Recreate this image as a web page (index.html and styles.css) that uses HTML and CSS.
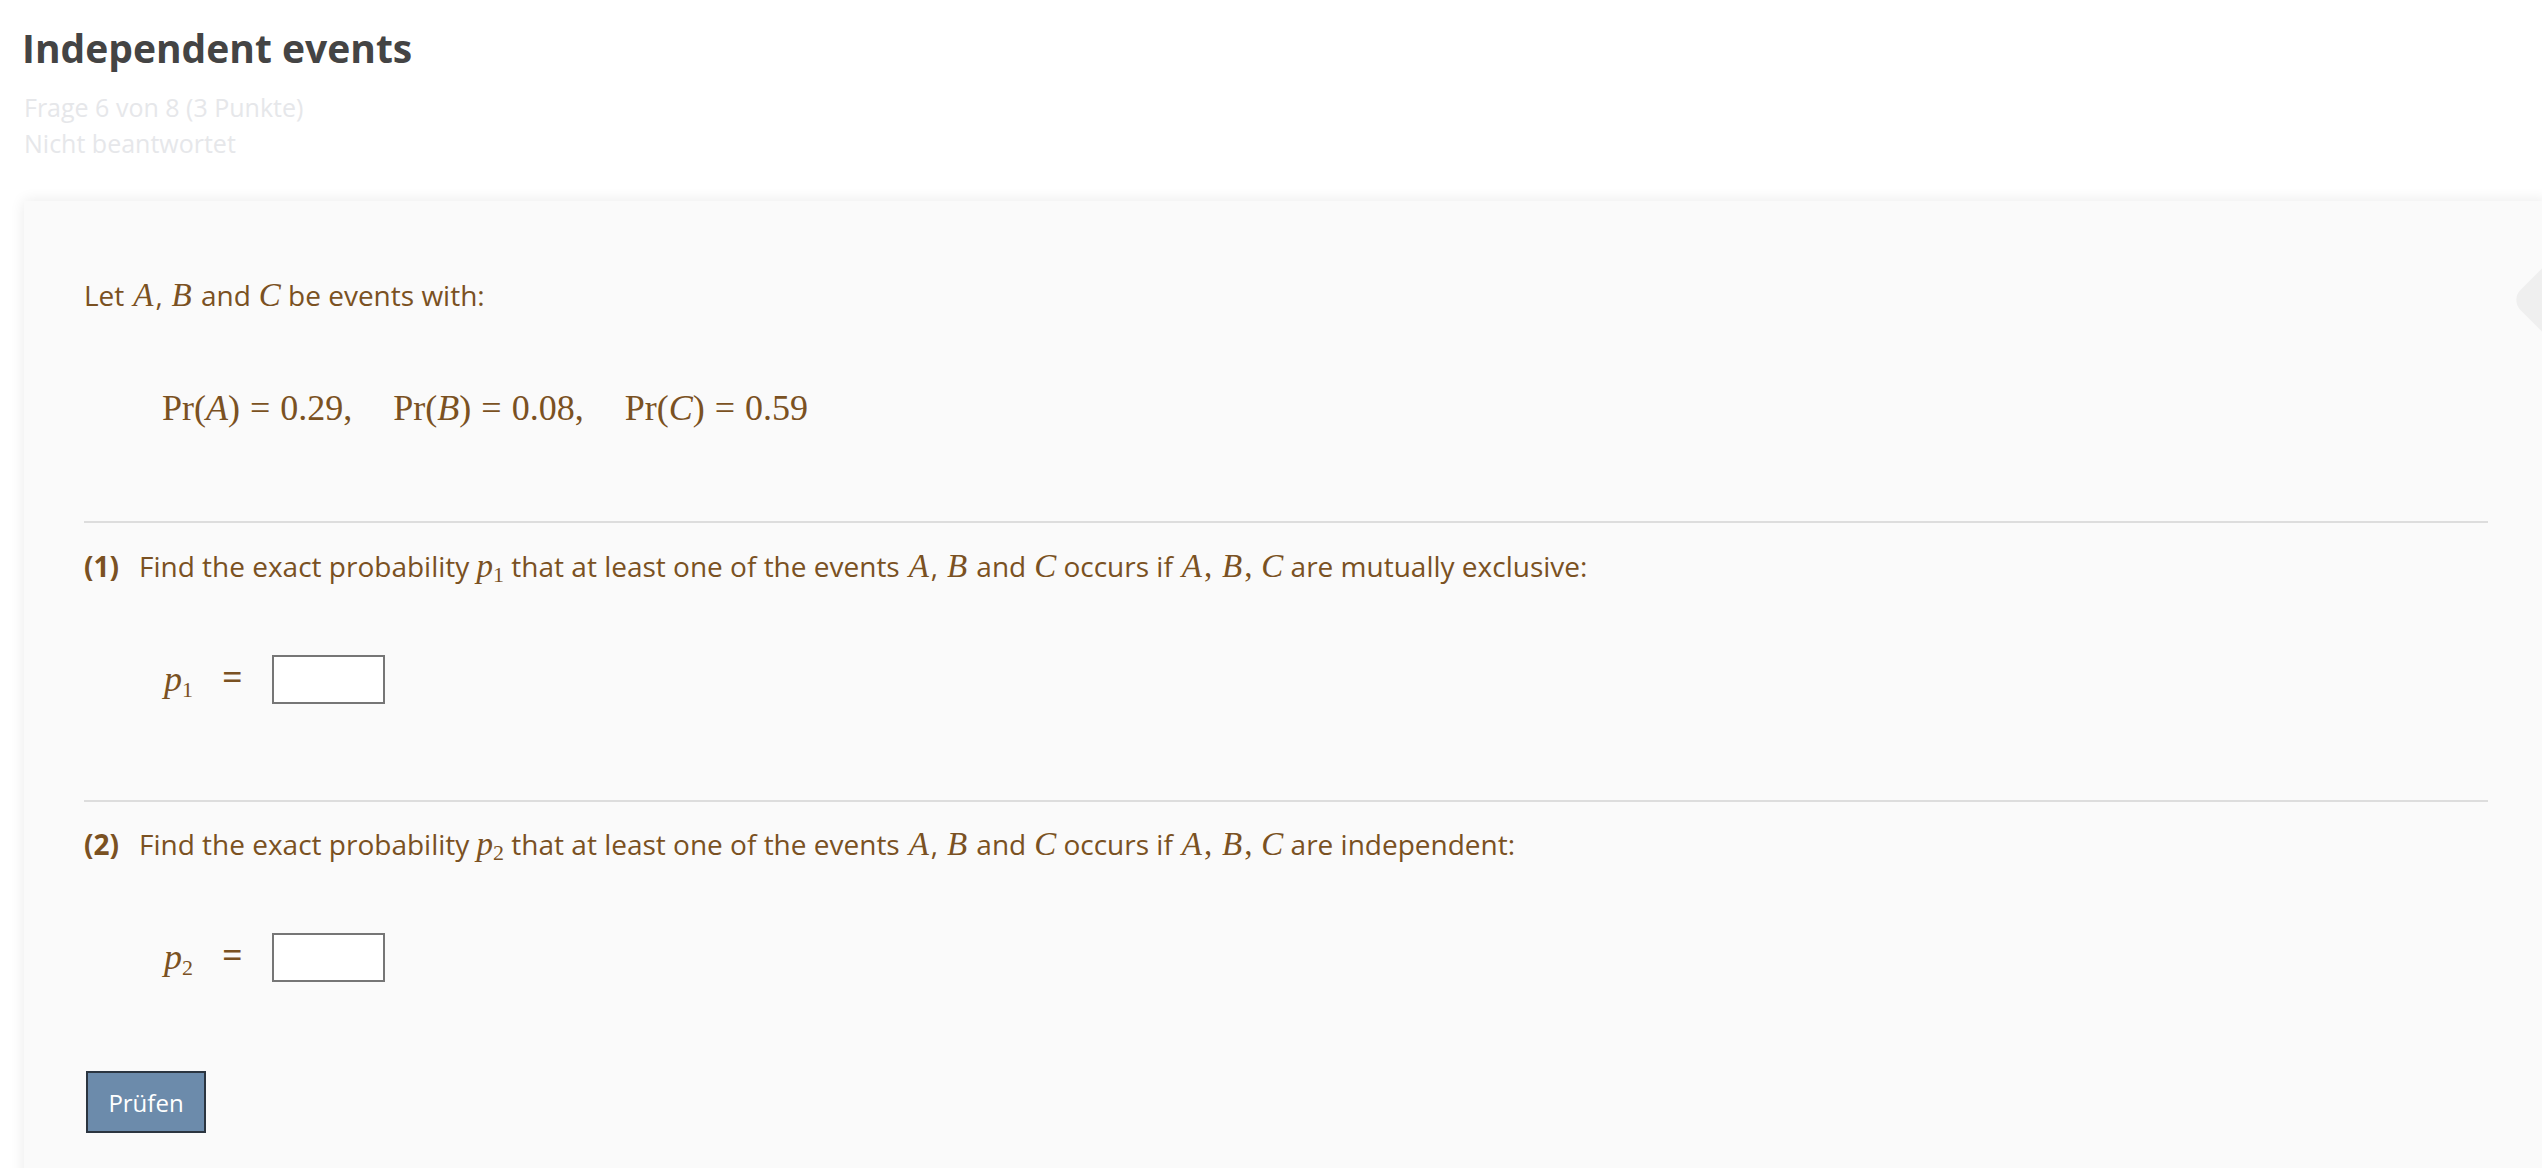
FILE: index.html
```html
<!DOCTYPE html>
<html lang="de">
<head>
<meta charset="utf-8">
<title>Independent events</title>
<link rel="stylesheet" href="styles.css">
</head>
<body>
<div class="page">
  <header class="head">
    <h1 class="title">Independent events</h1>
    <div class="meta">Frage 6 von 8 (3 Punkte)</div>
    <div class="meta">Nicht beantwortet</div>
  </header>

  <section class="card">
    <div class="side-tab"></div>

    <p class="intro">Let <span class="m"><i class="ma">A</i></span>, <span class="m"><i class="mb">B</i></span> and <span class="m"><i class="mc">C</i></span> be events with:</p>

    <div class="display">
      <span class="grp">Pr(<i>A</i>)<span class="rel">=</span>0.29,</span><span class="grp">Pr(<i>B</i>)<span class="rel">=</span>0.08,</span><span class="grp">Pr(<i>C</i>)<span class="rel">=</span>0.59</span>
    </div>

    <hr class="sep sep-first">

    <p class="part"><span class="num">(1)</span>Find the exact probability <span class="m"><i>p</i><sub>1</sub></span> that at least one of the events <span class="m"><i class="ma">A</i></span>, <span class="m"><i class="mb">B</i></span> and <span class="m"><i class="mc">C</i></span> occurs if <span class="m"><i class="ma">A</i>, <i class="mb">B</i>, <i class="mc">C</i></span> are mutually exclusive:</p>

    <div class="answer">
      <span class="var"><i>p</i><sub>1</sub></span>
      <span class="eq">=</span>
      <input class="box" type="text" aria-label="p1">
    </div>

    <hr class="sep">

    <p class="part part-second"><span class="num">(2)</span>Find the exact probability <span class="m"><i>p</i><sub>2</sub></span> that at least one of the events <span class="m"><i class="ma">A</i></span>, <span class="m"><i class="mb">B</i></span> and <span class="m"><i class="mc">C</i></span> occurs if <span class="m"><i class="ma">A</i>, <i class="mb">B</i>, <i class="mc">C</i></span> are independent:</p>

    <div class="answer">
      <span class="var"><i>p</i><sub>2</sub></span>
      <span class="eq">=</span>
      <input class="box" type="text" aria-label="p2">
    </div>

    <button class="check" type="button">Prüfen</button>
  </section>
</div>
</body>
</html>
```

FILE: styles.css
```css
html, body {
  margin: 0;
  padding: 0;
  background: #ffffff;
  overflow: hidden;
}

body {
  font-family: "Open Sans", "Noto Sans", sans-serif;
  color: #7a5122;
}

.page {
  padding-left: 24px;
}

.head {
  padding-top: 24px;
}

.title {
  margin: 0 0 0 -2px;
  font-size: 39px;
  line-height: 47px;
  font-weight: 700;
  color: #444444;
}

.meta {
  font-size: 25px;
  line-height: 36px;
  color: #e6e7ea;
}

.meta:first-of-type {
  margin-top: 18px;
}

.card {
  position: relative;
  margin-top: 40px;
  width: 2524px;
  height: 1100px;
  box-sizing: border-box;
  padding: 76px 60px 0;
  background: #fafafa;
  box-shadow: 0 0 14px rgba(0, 0, 0, 0.09);
}

.side-tab {
  position: absolute;
  right: -35px;
  top: 69px;
  width: 60px;
  height: 60px;
  border-radius: 14px;
  background: #efefef;
  transform: rotate(45deg);
}

.intro,
.part {
  margin: 0;
  font-size: 28px;
  line-height: 36px;
}

.m,
.display,
.var {
  font-family: "Liberation Serif", "Times New Roman", serif;
}

.m {
  font-size: 33px;
}

.m i,
.display i,
.var i {
  font-style: italic;
}

/* widen letters towards the advance widths of the TeX math-italic glyphs */
.m .ma,
.m .mb {
  padding: 0 0.06em 0 0.05em;
}

.m .mc {
  padding-left: 0.02em;
}

.m sub {
  font-size: 22px;
  vertical-align: -5px;
  line-height: 0;
}

.display {
  margin-top: 71px;
  padding-left: 78px;
  font-size: 36px;
  line-height: 48px;
  white-space: nowrap;
}

.grp {
  margin-right: 41px;
}

.rel {
  margin: 0 10px;
}

.sep {
  margin: 96px 0 0;
  border: 0;
  height: 2px;
  background: #dddddd;
}

.sep-first {
  margin-top: 89px;
}

.part {
  margin-top: 25px;
}

.part-second {
  margin-top: 24px;
}

.num {
  font-weight: 700;
  margin-right: 20px;
}

.answer {
  display: flex;
  align-items: center;
  height: 49px;
  margin-top: 71px;
  padding-left: 80px;
}

.var {
  width: 58px;
  font-size: 36px;
  line-height: 49px;
}

.var sub {
  font-size: 22px;
  vertical-align: -6px;
  line-height: 0;
}

.eq {
  width: 50px;
  font-size: 36px;
  line-height: 49px;
  margin-top: -6px;
}

.box {
  box-sizing: border-box;
  width: 113px;
  height: 49px;
  margin: 0;
  border: 2px solid #767676;
  background: #ffffff;
  padding: 0 6px;
  font-family: "Open Sans", sans-serif;
  font-size: 24px;
}

.check {
  display: block;
  box-sizing: border-box;
  margin-top: 89px;
  margin-left: 2px;
  width: 120px;
  height: 62px;
  padding: 0;
  border: 2px solid #2b3540;
  border-radius: 0;
  background: #6c8bab;
  color: #ffffff;
  font-family: "Open Sans", sans-serif;
  font-size: 24px;
}
```
